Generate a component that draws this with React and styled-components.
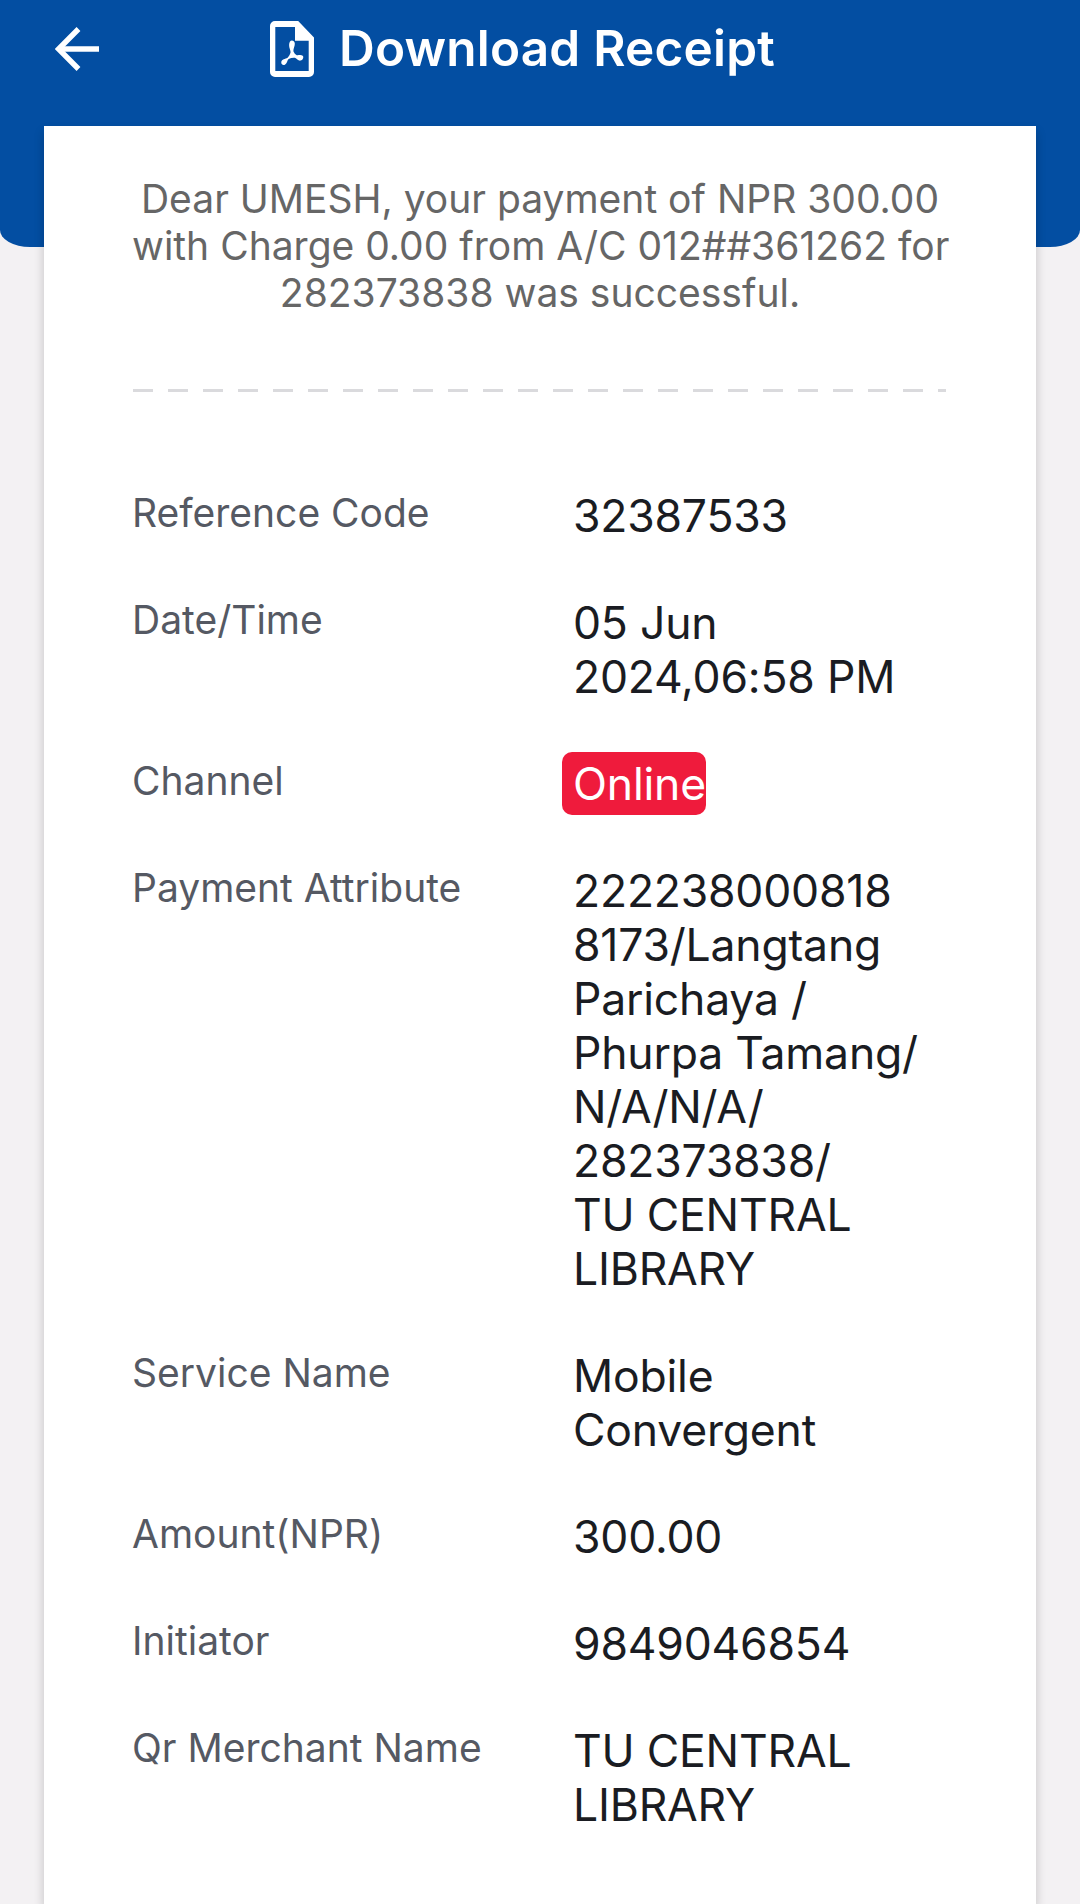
import styled, { createGlobalStyle } from 'styled-components';

const details = [
  { label: 'Reference Code', lines: ['32387533'] },
  { label: 'Date/Time', lines: ['05 Jun', '2024,06:58 PM'] },
  { label: 'Channel', lines: ['Online'], badge: true },
  {
    label: 'Payment Attribute',
    lines: [
      '222238000818',
      '8173/Langtang',
      'Parichaya /',
      'Phurpa Tamang/',
      'N/A/N/A/',
      '282373838/',
      'TU CENTRAL',
      'LIBRARY',
    ],
  },
  { label: 'Service Name', lines: ['Mobile', 'Convergent'] },
  { label: 'Amount(NPR)', lines: ['300.00'] },
  { label: 'Initiator', lines: ['9849046854'] },
  { label: 'Qr Merchant Name', lines: ['TU CENTRAL', 'LIBRARY'] },
];

const message = [
  'Dear UMESH, your payment of NPR 300.00',
  'with Charge 0.00 from A/C 012##361262 for',
  '282373838 was successful.',
];

function BackIcon() {
  return (
    <svg width="44" height="44" viewBox="0 0 44 44" fill="none" stroke="#fff" strokeWidth="5.4">
      <path d="M44 22H5" />
      <path d="M23.5 2L3.6 22l19.9 20" />
    </svg>
  );
}

function PdfIcon() {
  return (
    <svg width="44" height="56" viewBox="0 0 44 56" fill="#fff">
      <path
        fillRule="evenodd"
        d="M5 0h23.2L44 16.6V51a5 5 0 0 1-5 5H5a5 5 0 0 1-5-5V5a5 5 0 0 1 5-5zM5.3 6v44h33.4V19.7H25V6z"
      />
      <path d="M22 19.5c2.3 0 3.2 2.2 2.7 4.6-.5 2.5-1.4 4.1-1.3 6.1.8 2 1.9 3.2 3.4 4 2 .2 4.3-.7 5.9.6 1.4 1.5.2 4.5-2.2 4.8-2.5.3-3.6-1.9-5.6-2.9-2.2-.2-4.3.3-6.3 1.2-1.5 1.5-1.5 4.5-3.7 5.8-1.9.9-4-.3-3.6-2.6.5-2.9 4-2.9 6.3-4.3 1.4-1.5 2.5-3.4 3-5.5-.1-2.5-1.6-4.7-1.5-7.3.1-2.5 1-4.5 2.9-4.5z" />
    </svg>
  );
}

export default function App() {
  return (
    <>
      <GlobalStyle />
      <Screen>
        <Header>
          <BackButton aria-label="Back">
            <BackIcon />
          </BackButton>
          <DownloadButton>
            <PdfIcon />
            <Title>Download Receipt</Title>
          </DownloadButton>
        </Header>
        <Receipt>
          <Message>
            {message.map((line) => (
              <Line key={line}>{line}</Line>
            ))}
          </Message>
          <DashedLine />
          <Details>
            {details.map(({ label, lines, badge }) => (
              <Row key={label}>
                <Label>{label}</Label>
                <Value $badge={badge}>
                  {lines.map((line) => (
                    <Line key={line}>{line}</Line>
                  ))}
                </Value>
              </Row>
            ))}
          </Details>
        </Receipt>
      </Screen>
    </>
  );
}

const GlobalStyle = createGlobalStyle`
  * {
    box-sizing: border-box;
  }

  body {
    margin: 0;
    background: #f3f1f3;
    font-family: Inter, 'Liberation Sans', sans-serif;
  }
`;

const Screen = styled.div`
  display: flex;
  flex-direction: column;
  height: 1904px;
  overflow: hidden;
`;

const Header = styled.header`
  display: flex;
  align-items: flex-start;
  flex-shrink: 0;
  height: 247px;
  padding: 21px 55px 0;
  border-radius: 0 0 30px 30px / 0 0 17px 17px;
  background: #034ea2;
`;

const BackButton = styled.button`
  display: flex;
  margin: 6px 171px 0 0;
  padding: 0;
  border: none;
  background: none;
`;

const DownloadButton = styled.button`
  display: flex;
  align-items: flex-start;
  gap: 25px;
  padding: 0;
  border: none;
  background: none;
  font-family: inherit;
`;

const Title = styled.span`
  margin-top: -3px;
  font-weight: 600;
  font-size: 49.5px;
  line-height: 60px;
  letter-spacing: 0.2px;
  white-space: nowrap;
  color: #fff;
`;

const Receipt = styled.main`
  position: relative;
  flex: 1;
  margin: -121px 44px 0;
  padding: 49px 88px 0;
  background: #fff;
  box-shadow: 0 6px 10px rgba(0, 0, 0, 0.2);
`;

const Message = styled.p`
  margin: 0;
  text-align: center;
  font-weight: 400;
  font-size: 39px;
  line-height: 47px;
  color: #666;
`;

const Line = styled.span`
  display: block;
  white-space: nowrap;
`;

const DashedLine = styled.div`
  width: 813px;
  height: 3px;
  margin: 73px 0 0 1px;
  background: repeating-linear-gradient(to right, #dadadd 0 20px, transparent 20px 35px);
`;

const Details = styled.div`
  display: flex;
  flex-direction: column;
  gap: 53px;
  margin-top: 97px;
`;

const Row = styled.div`
  display: grid;
  grid-template-columns: 441px 1fr;
  align-items: start;
`;

const Label = styled.span`
  font-weight: 400;
  font-size: 39px;
  line-height: 47px;
  color: #555963;
`;

const Value = styled.span`
  justify-self: start;
  margin: ${(props) => (props.$badge ? '-5px 0 -4px -11px' : '0')};
  padding: ${(props) => (props.$badge ? '5px 0 4px 11px' : '0')};
  border-radius: 10px;
  background: ${(props) => (props.$badge ? '#ef1b3c' : 'transparent')};
  font-weight: 400;
  font-size: 44.5px;
  line-height: 54px;
  letter-spacing: -0.2px;
  color: ${(props) => (props.$badge ? '#fff' : '#1a1c22')};
`;
